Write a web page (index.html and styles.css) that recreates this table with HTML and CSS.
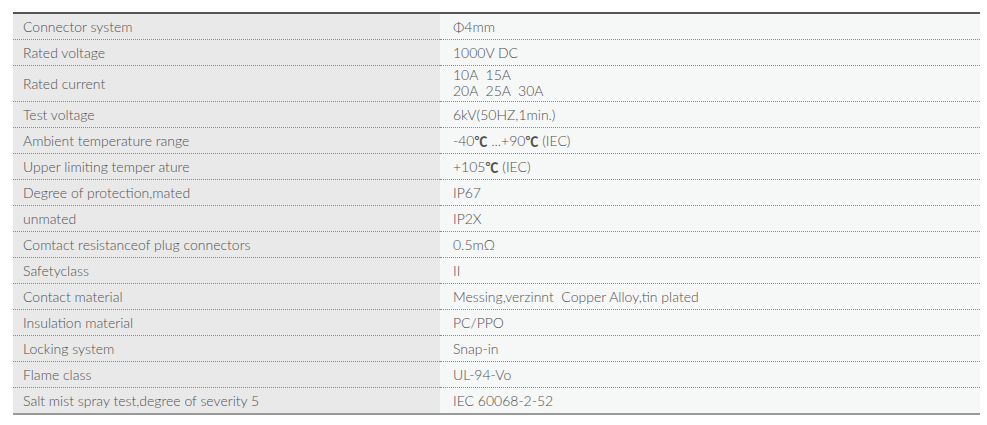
FILE: index.html
```html
<!DOCTYPE html>
<html>
<head>
<meta charset="utf-8">
<link rel="stylesheet" href="styles.css">
</head>
<body>
<table class="spec">
<tbody>
<tr><td class="k">Connector system</td><td class="v">Φ4mm</td></tr>
<tr><td class="k">Rated voltage</td><td class="v">1000V DC</td></tr>
<tr><td class="k">Rated current</td><td class="v two">10A&nbsp;&nbsp;15A<br>20A&nbsp;&nbsp;25A&nbsp;&nbsp;30A</td></tr>
<tr><td class="k">Test voltage</td><td class="v">6kV(50HZ,1min.)</td></tr>
<tr><td class="k">Ambient temperature range</td><td class="v">-40<span class="deg">℃</span> ...+90<span class="deg">℃</span> (IEC)</td></tr>
<tr><td class="k">Upper limiting temper ature</td><td class="v">+105<span class="deg">℃</span> (IEC)</td></tr>
<tr><td class="k">Degree of protection,mated</td><td class="v">IP67</td></tr>
<tr><td class="k">unmated</td><td class="v">IP2X</td></tr>
<tr><td class="k">Comtact resistanceof plug connectors</td><td class="v">0.5mΩ</td></tr>
<tr><td class="k">Safetyclass</td><td class="v">II</td></tr>
<tr><td class="k">Contact material</td><td class="v">Messing,verzinnt&nbsp; Copper Alloy,tin plated</td></tr>
<tr><td class="k">Insulation material</td><td class="v">PC/PPO</td></tr>
<tr><td class="k">Locking system</td><td class="v">Snap-in</td></tr>
<tr><td class="k">Flame class</td><td class="v">UL-94-Vo</td></tr>
<tr class="last"><td class="k">Salt mist spray test,degree of severity 5</td><td class="v">IEC 60068-2-52</td></tr>
</tbody>
</table>
</body>
</html>
```
FILE: styles.css
```css
html, body {
  margin: 0;
  background: #ffffff;
}
body {
  padding: 12px 0 0 13px;
  font-family: "Lato", "Noto Sans", sans-serif;
  font-weight: 300;
  font-size: 14px;
  color: #505050;
}
.spec {
  width: 967px;
  border-collapse: collapse;
  border-top: 2px solid #555555;
  border-bottom: 2px solid #9a9a9a;
}
.spec td {
  padding: 4px 10px;
  line-height: 17px;
  border-bottom: 1px dotted #8a8a8a;
  vertical-align: middle;
  white-space: nowrap;
}
.spec tr.last td {
  border-bottom: none;
}
.k {
  width: 407px;
  background: #e9e9e9;
}
.v {
  background: #f6f7f7;
  padding-left: 13px !important;
}
.v.two {
  line-height: 16px;
  padding-top: 1px;
  padding-bottom: 2px;
}
.deg {
  font-family: "Noto Sans CJK SC", sans-serif;
  font-weight: 700;
  font-size: 13px;
}
```
